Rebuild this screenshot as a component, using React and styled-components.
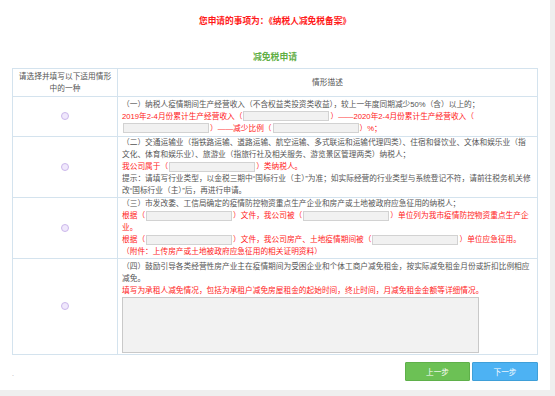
import React from "react";
import styled, { createGlobalStyle } from "styled-components";

const GlobalStyle = createGlobalStyle`
  html, body {
    margin: 0;
    padding: 0;
    background: #efefef;
  }
  body {
    font-family: "Liberation Sans", "Noto Sans CJK SC", sans-serif;
  }
`;

const Page = styled.div`
  width: 550px;
  height: 390px;
  background: #fff;
  display: flex;
  flex-direction: column;
`;

const Title = styled.div`
  padding-top: 15px;
  text-align: center;
  color: #ff1a1a;
  font-weight: bold;
  font-size: 8.7px;
  line-height: 12px;
`;

const SubTitle = styled.div`
  margin-top: 24px;
  text-align: center;
  color: #5fae44;
  font-weight: bold;
  font-size: 8.8px;
  line-height: 12px;
`;

const Table = styled.table`
  margin: 5px 12px 0;
  width: 526px;
  border-collapse: collapse;
  border: 1px solid #d4e3ee;
  font-size: 7.7px;
  color: #555;
`;

const Row = styled.tr`
  height: ${({ $h }) => $h}px;
`;

const ChoiceCell = styled.td`
  width: 104px;
  padding: 0;
  border: 1px solid #d4e3ee;
  text-align: center;
  vertical-align: middle;
  line-height: 12px;
`;

const DescCell = styled.td`
  padding: ${({ $top }) => ($top ? "2px 4px 0" : "0 4px")};
  border: 1px solid #d4e3ee;
  vertical-align: ${({ $top }) => ($top ? "top" : "middle")};
  text-align: left;
`;

const HeadCell = styled.td`
  padding: 0;
  border: 1px solid #d4e3ee;
  text-align: center;
  vertical-align: middle;
  line-height: 12px;
`;

const Radio = styled.span`
  display: inline-block;
  width: 6px;
  height: 6px;
  border-radius: 50%;
  border: 1px solid #cbb7ea;
  background: #f0e8fc;
  vertical-align: middle;
`;

const Line = styled.div`
  white-space: nowrap;
  height: 12px;
  line-height: 12px;
  color: ${({ $red }) => ($red ? "#ff1a1a" : "#555")};
`;

const Field = styled.span`
  display: inline-block;
  box-sizing: border-box;
  width: 86px;
  height: 10px;
  margin: 0 1px;
  background: #f1f1f1;
  border: 1px solid #d2d2d2;
  vertical-align: middle;
`;

const Area = styled.textarea`
  display: block;
  box-sizing: border-box;
  width: 357px;
  height: 56px;
  margin: 0;
  padding: 0;
  background: #f2f2f2;
  border: 1px solid #c9c9c9;
  resize: none;
`;

const Footer = styled.div`
  display: flex;
  justify-content: space-between;
  align-items: flex-start;
  margin-top: 7px;
  padding: 0 12px;
`;

const Dot = styled.span`
  margin-top: 8px;
  font-size: 7px;
  color: #aaa;
`;

const Buttons = styled.div`
  display: flex;
  gap: 2px;
`;

const Button = styled.button`
  width: ${({ $w }) => $w}px;
  height: 19px;
  padding: 0;
  border: 1px solid ${({ $blue }) => ($blue ? "#3f9fd8" : "#5fb04a")};
  border-radius: 1px;
  background: ${({ $blue }) => ($blue ? "#4db2f3" : "#6cc155")};
  color: #fff;
  font-family: inherit;
  font-size: 7.7px;
  cursor: pointer;
`;

export default function App() {
  return (
    <Page>
      <GlobalStyle />
      <Title>您申请的事项为：《纳税人减免税备案》</Title>
      <SubTitle>减免税申请</SubTitle>
      <Table>
        <tbody>
          <Row $h={28}>
            <HeadCell>
              请选择并填写以下适用情形
              <br />
              中的一种
            </HeadCell>
            <HeadCell>情形描述</HeadCell>
          </Row>
          <Row $h={40}>
            <ChoiceCell>
              <Radio />
            </ChoiceCell>
            <DescCell>
              <Line>（一）纳税人疫情期间生产经营收入（不含权益类投资类收益），较上一年度同期减少50%（含）以上的；</Line>
              <Line $red>
                2019年2-4月份累计生产经营收入（<Field />）——2020年2-4月份累计生产经营收入（
              </Line>
              <Line $red>
                <Field />）——减少比例（<Field />）%；
              </Line>
            </DescCell>
          </Row>
          <Row $h={61}>
            <ChoiceCell>
              <Radio />
            </ChoiceCell>
            <DescCell>
              <Line>（二）交通运输业（指铁路运输、道路运输、航空运输、多式联运和运输代理四类）、住宿和餐饮业、文体和娱乐业（指</Line>
              <Line>文化、体育和娱乐业）、旅游业（指旅行社及相关服务、游览景区管理两类）纳税人；</Line>
              <Line $red>
                我公司属于（<Field />）类纳税人。
              </Line>
              <Line>提示：请填写行业类型，以金税三期中“国标行业（主）”为准；如实际经营的行业类型与系统登记不符，请前往税务机关修</Line>
              <Line>改“国标行业（主）”后，再进行申请。</Line>
            </DescCell>
          </Row>
          <Row $h={61}>
            <ChoiceCell>
              <Radio />
            </ChoiceCell>
            <DescCell>
              <Line>（三）市发改委、工信局确定的疫情防控物资重点生产企业和房产或土地被政府应急征用的纳税人；</Line>
              <Line $red>
                根据（<Field />）文件，我公司被（<Field />）单位列为我市疫情防控物资重点生产企
              </Line>
              <Line $red>业。</Line>
              <Line $red>
                根据（<Field />）文件，我公司房产、土地疫情期间被（<Field />）单位应急征用。
              </Line>
              <Line $red>（附件：上传房产或土地被政府应急征用的相关证明资料）</Line>
            </DescCell>
          </Row>
          <Row $h={96}>
            <ChoiceCell>
              <Radio />
            </ChoiceCell>
            <DescCell $top>
              <Line>（四）鼓励引导各类经营性房产业主在疫情期间为受困企业和个体工商户减免租金，按实际减免租金月份或折扣比例相应</Line>
              <Line>减免。</Line>
              <Line $red>填写为承租人减免情况，包括为承租户减免房屋租金的起始时间，终止时间，月减免租金金额等详细情况。</Line>
              <Area />
            </DescCell>
          </Row>
        </tbody>
      </Table>
      <Footer>
        <Dot>.</Dot>
        <Buttons>
          <Button $w={65}>上一步</Button>
          <Button $w={66} $blue>下一步</Button>
        </Buttons>
      </Footer>
    </Page>
  );
}
